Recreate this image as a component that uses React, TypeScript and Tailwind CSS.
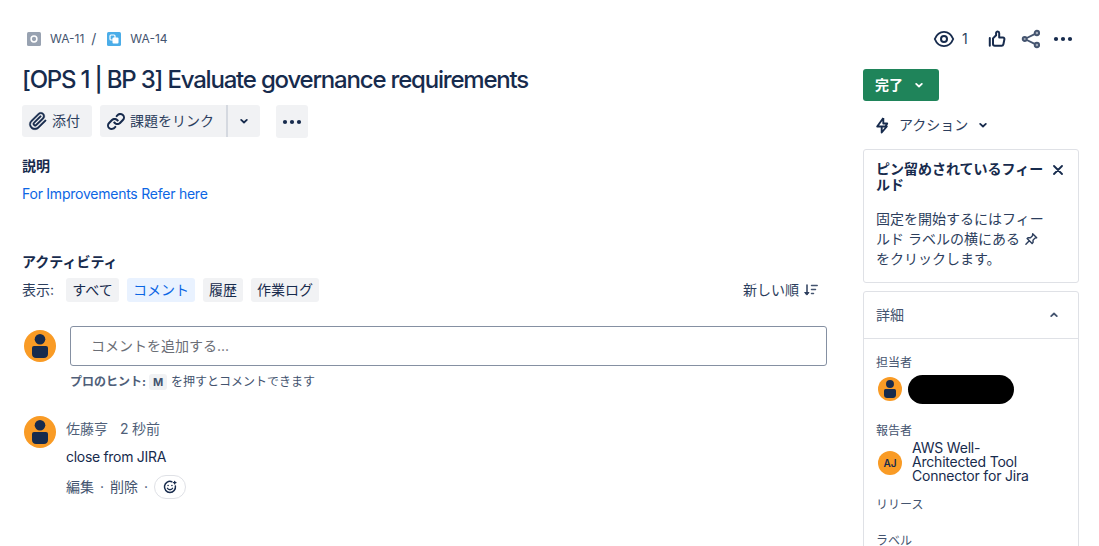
import type { ReactNode } from 'react'

// ── Icons ─────────────────────────────────────────────────────────────────────

function ChevronDown({ className = '' }: { className?: string }) {
  return (
    <svg viewBox="0 0 8 8" className={`size-2 shrink-0 ${className}`} fill="none" stroke="currentColor" strokeWidth="1.8" strokeLinecap="round" strokeLinejoin="round">
      <path d="M1.200 2.900 4 5.500 6.800 2.900" />
    </svg>
  )
}

function AttachIcon() {
  return (
    <svg viewBox="0 0 24 24" className="size-6 shrink-0" fill="currentColor" stroke="currentColor" strokeWidth="0.3">
      <path d="M11.643 17.965c-1.53 1.495-4.016 1.496-5.542.004a3.773 3.773 0 0 1 .002-5.412l7.147-6.985a2.316 2.316 0 0 1 3.22.004 2.197 2.197 0 0 1 .004 3.15l-6.78 6.627a.75.75 0 0 1-1.038-.001.703.703 0 0 1 0-1.014l6.448-6.302a.82.82 0 0 0 0-1.178.868.868 0 0 0-1.206 0L7.45 13.16a2.344 2.344 0 0 0-.002 3.365 2.456 2.456 0 0 0 3.451-.003l6.78-6.627a3.838 3.838 0 0 0-.002-5.496c-1.565-1.53-4.072-1.53-5.637 0L4.896 11.38a5.413 5.413 0 0 0-.001 7.765c2.192 2.142 5.747 2.142 7.943-.004l7.149-6.986a.82.82 0 0 0 0-1.178.868.868 0 0 0-1.207 0l-7.137 6.988z" />
    </svg>
  )
}

function LinkIcon() {
  return (
    <svg viewBox="0 0 24 24" className="size-6 shrink-0" fill="currentColor">
      <path d="m12.856 5.457-.937.92a1.002 1.002 0 0 0 0 1.437 1.047 1.047 0 0 0 1.463 0l.984-.966c.967-.95 2.542-1.135 3.602-.288a2.54 2.54 0 0 1 .203 3.81l-2.903 2.852a2.646 2.646 0 0 1-3.696 0l-1.11-1.09L9 13.57l1.108 1.089c1.822 1.788 4.802 1.788 6.622 0l2.905-2.852a4.558 4.558 0 0 0-.357-6.82c-1.893-1.517-4.695-1.226-6.422.47" />
      <path d="m11.144 19.543.937-.92a1.002 1.002 0 0 0 0-1.437 1.047 1.047 0 0 0-1.462 0l-.985.966c-.967.95-2.542 1.135-3.602.288a2.54 2.54 0 0 1-.203-3.81l2.903-2.852a2.646 2.646 0 0 1 3.696 0l1.11 1.09L15 11.43l-1.108-1.089c-1.822-1.788-4.802-1.788-6.622 0l-2.905 2.852a4.558 4.558 0 0 0 .357 6.82c1.893 1.517 4.695 1.226 6.422-.47" />
    </svg>
  )
}

function DotsIcon() {
  return (
    <svg viewBox="0 0 20 6" className="h-1.5 w-5 shrink-0" fill="currentColor">
      <circle cx="3" cy="3" r="2.1" />
      <circle cx="10" cy="3" r="2.1" />
      <circle cx="17" cy="3" r="2.1" />
    </svg>
  )
}

function EyeIcon() {
  return (
    <svg viewBox="0 0 22 18" className="h-[18px] w-[22px] shrink-0" fill="none" stroke="currentColor" strokeWidth="1.9">
      <path d="M1.8 9C3.6 4.6 6.9 1.9 11 1.9s7.4 2.7 9.2 7.1c-1.8 4.4-5.1 7.1-9.2 7.1S3.600 13.400 1.800 9Z" />
      <circle cx="11" cy="9" r="3" strokeWidth="2" />
    </svg>
  )
}

function ThumbIcon() {
  return (
    <svg viewBox="0 0 18 18" className="size-[18px] shrink-0" fill="none" stroke="currentColor" strokeWidth="2" strokeLinecap="round" strokeLinejoin="round">
      <path d="M1.800 8v7.800" />
      <path d="M5 8.400 8.100 5.200V3c0-1.900 3.100-1.900 3.100.2v4.300h3.700c1.200 0 1.700.8 1.500 1.800l-1 5c-.2.900-.8 1.500-1.800 1.500H6.800c-1.100 0-1.800-.7-1.800-1.800Z" />
    </svg>
  )
}

function ShareIcon() {
  return (
    <svg viewBox="0 0 20 20" className="size-5 shrink-0 text-[#44546f]" fill="none" stroke="currentColor" strokeWidth="1.9">
      <path d="m5.800 9 8.400-4.200M5.800 11l8.400 4.200" />
      <circle cx="3.700" cy="10" r="2" fill="#a5adba" />
      <circle cx="15.900" cy="4" r="2.200" fill="#a5adba" />
      <circle cx="15.900" cy="16" r="2.200" fill="#a5adba" />
    </svg>
  )
}

function BoltIcon() {
  return (
    <svg viewBox="0 0 14 18" className="h-[18px] w-3.5 shrink-0 text-[#172b4d]" fill="none" stroke="currentColor" strokeWidth="1.900" strokeLinejoin="round">
      <path d="M8.300 2 2.200 10.500h9.600L6.700 16.500V9.500M8.300 2v5.500h3.900L10.500 10.500" />
    </svg>
  )
}

function PinIcon() {
  return (
    <svg viewBox="0 0 14 14" className="-mt-0.5 inline-block size-3.5" fill="none" stroke="currentColor" strokeWidth="1.400" strokeLinejoin="round" strokeLinecap="round">
      <path d="m8.700 1.700 4 4-1.800.4-1.900 2.100.1 2.200-1 1.200-5-5 1.200-1 2.200.1 2-1.900ZM5.300 8.800 1.900 12.200" />
    </svg>
  )
}

function SortIcon() {
  return (
    <svg viewBox="0 0 14 12" className="h-3 w-3.5 shrink-0" fill="none" stroke="currentColor" strokeWidth="1.500" strokeLinecap="round">
      <path d="M3 1v9" />
      <path d="M1 8.500h4L3 10.800Z" fill="currentColor" strokeWidth="1" strokeLinejoin="round" />
      <path d="M7.500 1.500h5.700M7.500 5.500h4M7.500 9.500h2" stroke="#44546f" />
    </svg>
  )
}

function EmojiIcon() {
  return (
    <svg viewBox="0 0 14 14" className="size-3.5" fill="none" stroke="currentColor" strokeWidth="1.500" strokeLinecap="round">
      <path d="M8.800 1.700A5.500 5.500 0 1 0 12.400 6" />
      <path d="M4.400 8.300c.9 1.900 4.300 1.900 5.200 0" strokeWidth="1.300" />
      <circle cx="5.100" cy="5.500" r=".8" fill="currentColor" stroke="none" />
      <circle cx="8.900" cy="5.500" r=".8" fill="currentColor" stroke="none" />
      <path d="M11.700 1.300v2.600M10.400 2.600h2.600" strokeWidth="1.300" />
    </svg>
  )
}

function PersonAvatar({ className }: { className: string }) {
  return (
    <svg viewBox="0 0 32 32" className={`shrink-0 ${className}`}>
      <circle cx="16" cy="16" r="16" fill="#f99b25" />
      <circle cx="16" cy="9.300" r="5.300" fill="#172b4d" />
      <path d="M8 18a2 2 0 0 1 2-2h12a2 2 0 0 1 2 2v6c0 2.500-1.800 4-4 4h-8c-2.200 0-4-1.500-4-4Z" fill="#172b4d" />
    </svg>
  )
}

// ── Pieces ────────────────────────────────────────────────────────────────────

const filters = [
  { label: 'すべて',     active: false, width: 'w-[53px]' },
  { label: 'コメント',   active: true,  width: 'w-[68px]' },
  { label: '履歴',       active: false, width: 'w-10' },
  { label: '作業ログ',   active: false, width: 'w-[68px]' },
]

function FieldLabel({ children }: { children: ReactNode }) {
  return <p className="text-xs leading-4 text-[#44546f]">{children}</p>
}

function Breadcrumbs() {
  return (
    <nav className="flex h-6 items-center pl-[5px] text-xs text-[#44546f]">
      <svg viewBox="0 0 14 14" className="size-3.5">
        <rect width="14" height="14" rx="1.500" fill="#98a2b1" />
        <circle cx="7" cy="7" r="2.900" fill="none" stroke="#fff" strokeWidth="1.500" />
      </svg>
      <span className="ml-[9px]">WA-11</span>
      <span className="ml-[7px] text-sm">/</span>
      <svg viewBox="0 0 14 14" className="ml-[11px] size-3.5">
        <rect width="14" height="14" rx="1.500" fill="#4bade8" />
        <rect x="3" y="3" width="5" height="5" rx="1" fill="none" stroke="#fff" strokeWidth="1.200" />
        <rect x="5.500" y="5.500" width="6" height="6" rx="1" fill="#fff" />
      </svg>
      <span className="ml-[9px]">WA-14</span>
    </nav>
  )
}

function Toolbar() {
  return (
    <div className="mt-[11px] flex h-[33px] items-start gap-2 text-sm">
      <button className="flex h-8 w-[70px] items-center rounded-[3px] bg-[#f1f2f4] pl-1">
        <AttachIcon />
        <span className="ml-0.5 whitespace-nowrap text-[#2c3e5d]">添付</span>
      </button>
      <div className="flex h-8">
        <button className="flex w-[126px] items-center rounded-l-[3px] bg-[#f1f2f4] pl-1">
          <LinkIcon />
          <span className="ml-0.5 whitespace-nowrap text-[#2c3e5d]">課題をリンク</span>
        </button>
        <button className="flex w-[34px] items-center justify-center rounded-r-[3px] border-l-2 border-[#d5d9e0] bg-[#f1f2f4]">
          <ChevronDown />
        </button>
      </div>
      <button className="ml-2 flex h-[33px] w-8 items-center justify-center rounded-[3px] bg-[#f1f2f4]">
        <DotsIcon />
      </button>
    </div>
  )
}

function Activity() {
  return (
    <section>
      <h2 className="mt-[48px] text-sm leading-5 font-bold">アクティビティ</h2>
      <div className="mt-1.5 flex h-6 items-center text-sm">
        <span className="w-11 text-[#2c3e5d]">表示:</span>
        <div className="flex gap-2">
          {filters.map(f => (
            <button
              key={f.label}
              className={`h-6 rounded-[3px] whitespace-nowrap ${f.width} ${
                f.active ? 'bg-[#e9f2ff] text-[#0c66e4]' : 'bg-[#f1f2f4] text-[#172b4d]'
              }`}
            >
              {f.label}
            </button>
          ))}
        </div>
        <button className="mr-[9px] ml-auto flex items-center gap-[5px] text-[#2c3e5d]">
          新しい順
          <SortIcon />
        </button>
      </div>

      {/* New comment */}
      <div className="mt-6 flex pl-0.5">
        <PersonAvatar className="mt-1 size-8" />
        <div className="ml-3.5 flex-1">
          <div className="flex h-10 items-center rounded-[3px] border border-[#8590a2] pl-5 text-sm text-[#6b6e76]">
            コメントを追加する...
          </div>
          <p className="mt-2 flex h-4 items-center text-xs text-[#44546f]">
            <b className="font-bold text-[#505f79]">プロのヒント:</b>
            <span className="mr-1 ml-[3px] flex h-4 w-[18px] items-center justify-center rounded-[3px] bg-[#f1f2f4] text-[11px] font-bold">M</span>
            <span>を押すとコメントできます</span>
          </p>
        </div>
      </div>

      {/* Comment */}
      <div className="mt-[26px] flex pl-0.5">
        <PersonAvatar className="size-8" />
        <div className="ml-2.5 text-sm">
          <p className="mt-[3px] flex h-5 items-center gap-3 text-[#505f79]">
            <span>佐藤亨</span>
            <span className="tracking-[-0.2px]">2 秒前</span>
          </p>
          <p className="mt-2 h-5 leading-5 tracking-[-0.3px]">close from JIRA</p>
          <div className="mt-2 flex h-6 items-center text-[#44546f]">
            <span>編集</span>
            <span className="w-4 text-center">·</span>
            <span>削除</span>
            <span className="w-4 text-center">·</span>
            <button className="flex h-6 w-8 items-center justify-center rounded-full border border-[#dfe1e6] text-[#172b4d]">
              <EmojiIcon />
            </button>
          </div>
        </div>
      </div>
    </section>
  )
}

function Sidebar() {
  return (
    <aside className="w-[216px] shrink-0">
      <div className="flex h-6 items-center pl-[70px]">
        <EyeIcon />
        <span className="ml-[7px] text-sm text-[#2c3e5d]">1</span>
        <span className="ml-5"><ThumbIcon /></span>
        <span className="ml-[15px]"><ShareIcon /></span>
        <span className="ml-3"><DotsIcon /></span>
      </div>

      <button className="mt-[18px] flex h-8 w-[76px] items-center rounded-[3px] bg-[#1f845a] pl-3 text-sm font-bold text-white">
        完了
        <ChevronDown className="ml-3" />
      </button>

      <button className="mt-3.5 flex h-5 items-center pl-3 text-sm text-[#2c3e5d]">
        <BoltIcon />
        <span className="ml-2.5">アクション</span>
        <ChevronDown className="ml-[11px] text-[#172b4d]" />
      </button>

      {/* Pinned fields */}
      <section className="mt-3.5 h-[134px] rounded-[3px] border border-[#dfe1e6] px-3 pt-[11px]">
        <div className="flex justify-between">
          <h2 className="w-[168px] text-sm leading-4 font-bold">ピン留めされているフィールド</h2>
          <svg viewBox="0 0 10 10" className="mt-1 mr-[3px] size-2.5" fill="none" stroke="currentColor" strokeWidth="1.800" strokeLinecap="round">
            <path d="m1 1 8 8M9 1 1 9" />
          </svg>
        </div>
        <p className="mt-4 text-sm leading-5 whitespace-nowrap text-[#2c3e5d]">
          固定を開始するにはフィー<br />
          ルド ラベルの横にある <PinIcon /><br />
          をクリックします。
        </p>
      </section>

      {/* Details */}
      <section className="mt-2 h-[300px] rounded-t-[3px] border border-[#dfe1e6]">
        <header className="flex h-[47px] items-center justify-between border-b border-[#dfe1e6] pr-5 pl-3 text-sm text-[#44546f]">
          詳細
          <ChevronDown className="rotate-180" />
        </header>
        <div className="px-3 pt-4">
          <FieldLabel>担当者</FieldLabel>
          <div className="mt-1 flex items-center pl-0.5">
            <PersonAvatar className="-mt-0.5 size-6" />
            <span className="ml-1.5 h-[29px] w-[106px] rounded-full bg-black" />
          </div>
          <div className="mt-[19px]">
            <FieldLabel>報告者</FieldLabel>
          </div>
          <div className="mt-0.5 flex items-center pl-0.5">
            <span className="mt-0.5 flex size-6 items-center justify-center rounded-full bg-[#f99b25] text-[10px] font-semibold">AJ</span>
            <div className="ml-2.5 text-sm leading-[14px] tracking-[-0.2px] whitespace-nowrap">
              <p>AWS Well-</p>
              <p>Architected Tool</p>
              <p>Connector for Jira</p>
            </div>
          </div>
          <div className="mt-3.5 flex flex-col gap-5">
            <FieldLabel>リリース</FieldLabel>
            <FieldLabel>ラベル</FieldLabel>
          </div>
        </div>
      </section>
    </aside>
  )
}

// ── Page ──────────────────────────────────────────────────────────────────────

export default function App() {
  return (
    <div className="flex h-[546px] w-[1099px] gap-9 overflow-hidden bg-white pt-[27px] pl-[22px] font-['Inter','Noto_Sans_CJK_JP',sans-serif] text-[#172b4d]">
      <main className="w-[805px] shrink-0">
        <Breadcrumbs />
        <h1 className="mt-[15px] text-2xl leading-7 font-medium tracking-[-1.2px] whitespace-nowrap">
          [OPS 1 | BP 3] Evaluate governance requirements
        </h1>
        <Toolbar />
        <h2 className="mt-[18px] text-sm leading-5 font-bold">説明</h2>
        <a className="mt-2 block text-sm leading-5 tracking-[-0.24px] text-[#0c66e4]">For Improvements Refer here</a>
        <Activity />
      </main>
      <Sidebar />
    </div>
  )
}
